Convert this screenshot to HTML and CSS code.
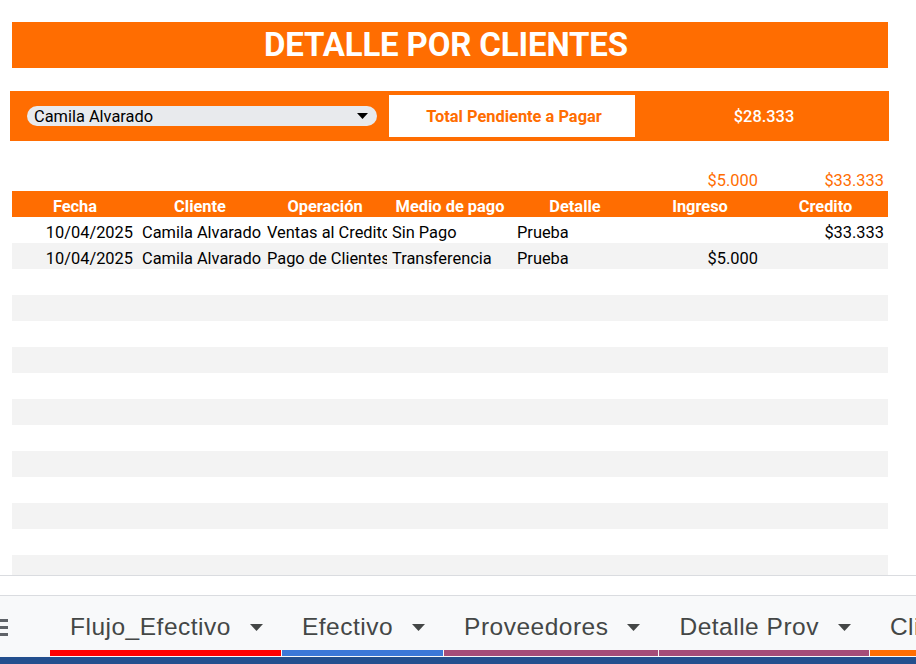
FILE: index.html
```html
<!DOCTYPE html>
<html lang="es">
<head>
<meta charset="utf-8">
<title>Detalle por clientes</title>
<link rel="stylesheet" href="styles.css">
</head>
<body>
<div class="sheet">
  <div class="title">DETALLE POR CLIENTES</div>
  <div class="summary">
    <div class="select">
      <span class="select-text">Camila Alvarado</span>
      <svg class="select-arrow" width="11" height="6" viewBox="0 0 11 6"><path d="M0 0H11L5.5 6Z" fill="#000"/></svg>
    </div>
    <div class="total-label">Total Pendiente a Pagar</div>
    <div class="total-value">$28.333</div>
  </div>
  <div class="grid">
    <div class="row totals">
      <div class="cell"></div><div class="cell"></div><div class="cell"></div><div class="cell"></div><div class="cell"></div>
      <div class="cell right">$5.000</div><div class="cell right">$33.333</div>
    </div>
    <div class="row head">
      <div class="cell">Fecha</div><div class="cell">Cliente</div><div class="cell">Operación</div><div class="cell">Medio de pago</div><div class="cell">Detalle</div><div class="cell">Ingreso</div><div class="cell">Credito</div>
    </div>
    <div class="row">
      <div class="cell right">10/04/2025</div><div class="cell">Camila Alvarado</div><div class="cell">Ventas al Credito</div><div class="cell">Sin Pago</div><div class="cell">Prueba</div><div class="cell right"></div><div class="cell right">$33.333</div>
    </div>
    <div class="row alt">
      <div class="cell right">10/04/2025</div><div class="cell">Camila Alvarado</div><div class="cell">Pago de Clientes</div><div class="cell">Transferencia</div><div class="cell">Prueba</div><div class="cell right">$5.000</div><div class="cell right"></div>
    </div>
    <div class="row"></div>
    <div class="row alt"></div>
    <div class="row"></div>
    <div class="row alt"></div>
    <div class="row"></div>
    <div class="row alt"></div>
    <div class="row"></div>
    <div class="row alt"></div>
    <div class="row"></div>
    <div class="row alt"></div>
    <div class="row"></div>
    <div class="row alt"></div>
  </div>
</div>
<div class="gap"></div>
<div class="tabbar">
  <div class="menu"><span></span><span></span><span></span></div>
  <div class="tab red">Flujo_Efectivo<svg class="tab-arrow" width="13" height="7" viewBox="0 0 13 7"><path d="M0 0H13L6.5 7Z" fill="#444746"/></svg></div>
  <div class="tab blue">Efectivo<svg class="tab-arrow" width="13" height="7" viewBox="0 0 13 7"><path d="M0 0H13L6.5 7Z" fill="#444746"/></svg></div>
  <div class="tab purple">Proveedores<svg class="tab-arrow" width="13" height="7" viewBox="0 0 13 7"><path d="M0 0H13L6.5 7Z" fill="#444746"/></svg></div>
  <div class="tab purple">Detalle Prov<svg class="tab-arrow" width="13" height="7" viewBox="0 0 13 7"><path d="M0 0H13L6.5 7Z" fill="#444746"/></svg></div>
  <div class="tab orange">Clientes</div>
</div>
<div class="taskbar"></div>
</body>
</html>
```
FILE: styles.css
```css
html, body {
  margin: 0;
  padding: 0;
  background: #ffffff;
  overflow: hidden;
}

body {
  width: 916px;
  height: 664px;
  font-family: Roboto, "Liberation Sans", Arial, sans-serif;
  color: #000;
}

.sheet {
  height: 575px;
  overflow: hidden;
  border-bottom: 1px solid #dadce0;
  box-sizing: content-box;
}

.title {
  margin: 22px 0 0 12px;
  width: 876px;
  height: 46px;
  background: #ff6d01;
  color: #fff;
  font-weight: 700;
  font-size: 33px;
  line-height: 46px;
  text-align: center;
  letter-spacing: -0.15px;
  text-indent: -8px;
}

.summary {
  margin: 23px 0 0 10px;
  width: 879px;
  height: 50px;
  background: #ff6d01;
  display: flex;
  align-items: center;
}

.select {
  margin-left: 17px;
  width: 350px;
  height: 20px;
  border-radius: 10px;
  background: #e8eaed;
  display: flex;
  align-items: center;
  justify-content: space-between;
  padding: 0 9px 0 7px;
  box-sizing: border-box;
}

.select-text {
  font-size: 16.4px;
  line-height: 20px;
  padding-top: 2px;
}

.total-label {
  margin-left: 12px;
  width: 246px;
  height: 42px;
  background: #fff;
  color: #ff6d01;
  font-weight: 700;
  font-size: 16.4px;
  display: flex;
  align-items: center;
  justify-content: center;
  padding: 1px 0 0 4px;
  box-sizing: border-box;
}

.total-value {
  flex: 1;
  color: #fff;
  font-weight: 500;
  font-size: 16.4px;
  text-align: center;
  padding-left: 4px;
  padding-top: 1px;
}

.grid {
  margin: 24px 0 0 12px;
  width: 876px;
}

.row {
  display: grid;
  grid-template-columns: 125px 125px 125px 125px 125px 125px 126px;
  height: 26px;
}

.row.alt {
  background: #f3f3f3;
}

.cell {
  height: 26px;
  box-sizing: border-box;
  padding: 6px 0 0 5px;
  line-height: 20px;
  font-size: 16.4px;
  white-space: nowrap;
  overflow: hidden;
}

.cell.right {
  text-align: right;
  padding: 6px 4px 0 0;
}

.totals .cell {
  color: #ff6d01;
}

.head {
  background: #ff6d01;
}

.head .cell {
  color: #fff;
  font-weight: 700;
  text-align: center;
  padding: 6px 0 0 1px;
}

.gap {
  height: 19px;
  border-bottom: 1px solid #dadce0;
}

.tabbar {
  height: 61px;
  background: #f8f9fa;
  display: flex;
  align-items: flex-start;
  overflow: hidden;
  white-space: nowrap;
}

.menu {
  width: 50px;
  padding-top: 23px;
  flex: none;
  display: flex;
  flex-direction: column;
  gap: 4px;
}

.menu span {
  display: block;
  width: 8px;
  height: 3px;
  background: #5f6368;
}

.tab {
  flex: none;
  border-bottom: 6px solid;
  margin-right: 1px;
  padding: 16px 18px 0 20px;
  box-sizing: border-box;
  height: 60px;
  font-family: "Liberation Sans", Arial, sans-serif;
  font-size: 24.5px;
  line-height: 30px;
  letter-spacing: 0.5px;
  color: #444746;
  display: flex;
  align-items: flex-start;
}

.tab-arrow {
  margin: 12px 0 0 19px;
}

.tab.red { border-bottom-color: #ff0000; }
.tab.blue { border-bottom-color: #3c78d8; }
.tab.purple { border-bottom-color: #a64d79; }
.tab.orange { border-bottom-color: #ff6d01; }

.taskbar {
  height: 7px;
  background: #234f8e;
}
```
